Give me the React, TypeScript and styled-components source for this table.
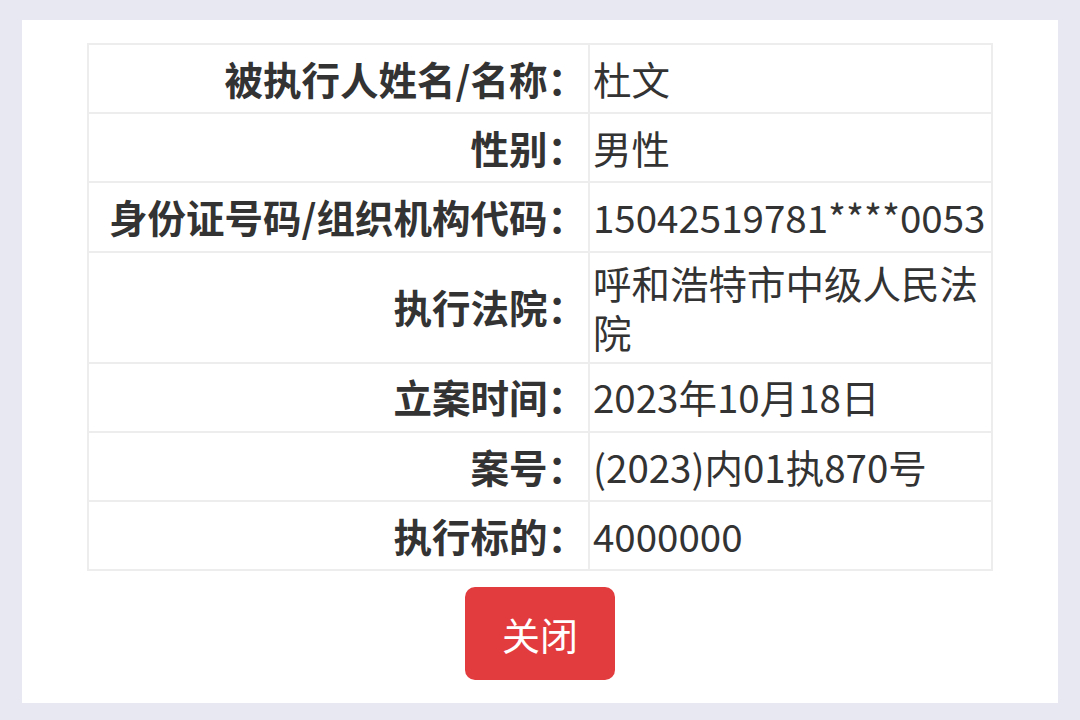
import styled, { createGlobalStyle } from 'styled-components'

const rows = [
  { label: '被执行人姓名/名称：', value: '杜文' },
  { label: '性别：', value: '男性' },
  { label: '身份证号码/组织机构代码：', value: '15042519781****0053' },
  { label: '执行法院：', value: '呼和浩特市中级人民法院' },
  { label: '立案时间：', value: '2023年10月18日' },
  { label: '案号：', value: '(2023)内01执870号' },
  { label: '执行标的：', value: '4000000' },
]

const GlobalStyle = createGlobalStyle`
  html, body {
    margin: 0;
    padding: 0;
    background: #e8e8f3;
  }
  body {
    font-family: "Noto Sans CJK SC", "Noto Sans", sans-serif;
    color: #333;
  }
`

const Page = styled.div`
  padding: 20px 22px 18px;
`

const Panel = styled.div`
  background: #fff;
  padding: 23px 0 23px;
  display: flex;
  flex-direction: column;
  align-items: center;
  gap: 16px;
`

const Table = styled.table`
  width: 906px;
  table-layout: fixed;
  border-collapse: collapse;
  border: 2px solid #ededed;
`

const Cell = styled.td`
  height: 57.2px;
  font-size: 38.5px;
  line-height: 49.5px;
  padding: 5px 2px 5px 3px;
  border: 2px solid #ededed;
  vertical-align: middle;
  color: #333;
`

const LabelCell = styled(Cell)`
  width: 494px;
  text-align: right;
  font-weight: bold;
`

const ValueCell = styled(Cell)`
  text-align: left;
`

const CloseButton = styled.button`
  width: 150px;
  height: 93px;
  border: none;
  border-radius: 10px;
  background: #e33c3e;
  color: #fff;
  font-family: "Noto Sans CJK SC", sans-serif;
  font-size: 38px;
  cursor: pointer;
`

const App = () => {
  return (
    <>
      <GlobalStyle />
      <Page>
        <Panel>
          <Table>
            <tbody>
              {rows.map((row) => (
                <tr key={row.label}>
                  <LabelCell>{row.label}</LabelCell>
                  <ValueCell>{row.value}</ValueCell>
                </tr>
              ))}
            </tbody>
          </Table>
          <CloseButton>关闭</CloseButton>
        </Panel>
      </Page>
    </>
  )
}

export default App
